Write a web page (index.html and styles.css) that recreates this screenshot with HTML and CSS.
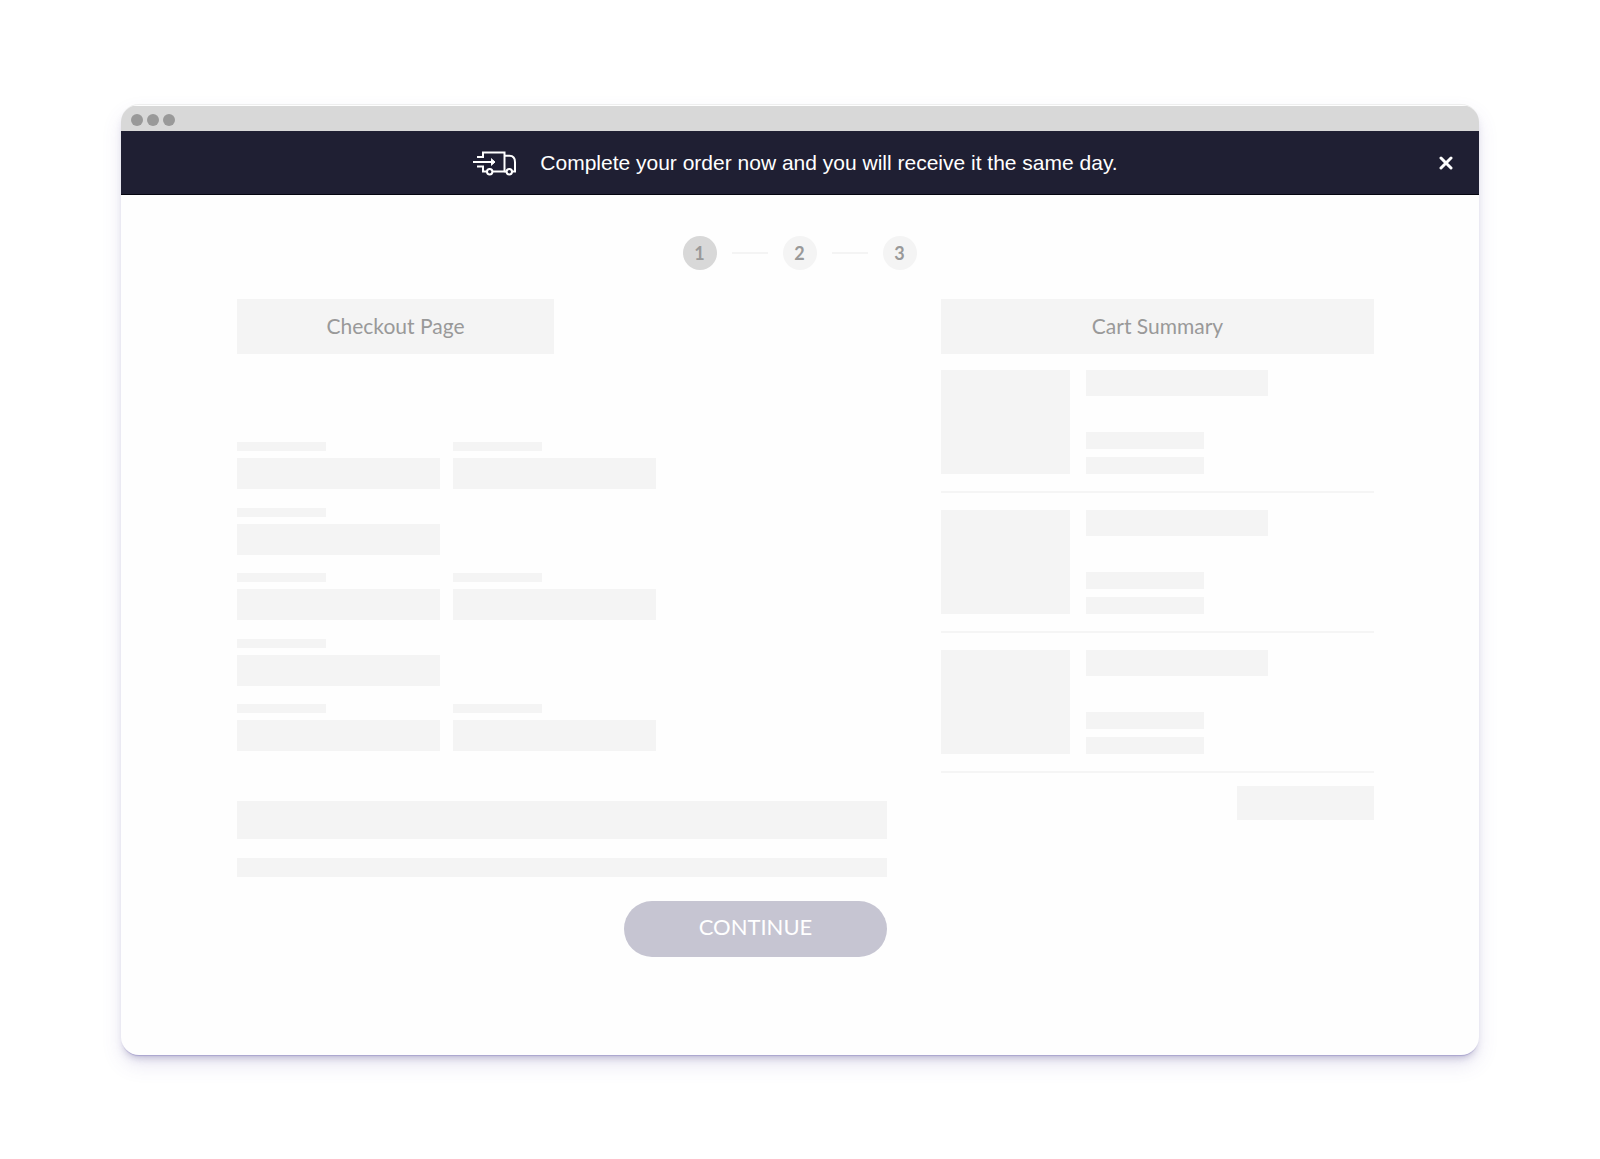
FILE: index.html
```html
<!DOCTYPE html>
<html lang="en">
<head>
<meta charset="utf-8">
<meta name="viewport" content="width=device-width, initial-scale=1">
<title>Checkout Page</title>
<link rel="stylesheet" href="styles.css">
</head>
<body>
<div class="window">
  <div class="titlebar"><span class="dot"></span><span class="dot"></span><span class="dot"></span></div>
  <div class="banner">
    <div class="banner-message">
      <svg class="truck" viewBox="0 0 46 26" width="46" height="26" fill="none" stroke="currentColor" stroke-width="2" aria-hidden="true">
        <path d="M5 7h6V2.500h21.500v19H20.500M5 16.500h6v5h4M1 12h21"/>
        <path d="M19 8.500l4 3.500l-4 3.500" fill="currentColor" stroke-width="1"/>
        <path d="M32.500 5.700h5c3.500 0 5.500 2.500 5.500 6.500v9.300h-3M32.500 21.500h2"/>
        <circle cx="17.700" cy="21.700" r="2.700"/>
        <circle cx="37.300" cy="21.700" r="2.700"/>
      </svg>
      <span>Complete your order now and you will receive it the same day.</span>
    </div>
    <button class="close" type="button" aria-label="Close">
      <svg viewBox="0 0 14 14" width="14" height="14" fill="none" stroke="currentColor" stroke-width="3" stroke-linecap="round" aria-hidden="true"><path d="M2 2l10 10M12 2L2 12"/></svg>
    </button>
  </div>
  <main class="content">
    <ol class="steps">
      <li class="step step-current">1</li>
      <li class="step">2</li>
      <li class="step">3</li>
    </ol>
    <div class="columns">
      <form class="checkout">
        <h1 class="heading heading-checkout">Checkout Page</h1>
        <div class="fields">
          <div class="row">
            <div class="field"><label class="label" for="f1"></label><input class="input" id="f1" type="text"></div>
            <div class="field"><label class="label" for="f2"></label><input class="input" id="f2" type="text"></div>
          </div>
          <div class="row">
            <div class="field"><label class="label" for="f3"></label><input class="input" id="f3" type="text"></div>
          </div>
          <div class="row">
            <div class="field"><label class="label" for="f4"></label><input class="input" id="f4" type="text"></div>
            <div class="field"><label class="label" for="f5"></label><input class="input" id="f5" type="text"></div>
          </div>
          <div class="row">
            <div class="field"><label class="label" for="f6"></label><input class="input" id="f6" type="text"></div>
          </div>
          <div class="row">
            <div class="field"><label class="label" for="f7"></label><input class="input" id="f7" type="text"></div>
            <div class="field"><label class="label" for="f8"></label><input class="input" id="f8" type="text"></div>
          </div>
        </div>
        <div class="block block-tall"></div>
        <div class="block block-short"></div>
        <button class="continue" type="button">CONTINUE</button>
      </form>
      <section class="cart">
        <h2 class="heading">Cart Summary</h2>
        <ul class="items">
          <li class="item"><div class="thumb"></div><div class="info"><div class="name"></div><div class="detail"></div><div class="detail"></div></div></li>
          <li class="item"><div class="thumb"></div><div class="info"><div class="name"></div><div class="detail"></div><div class="detail"></div></div></li>
          <li class="item"><div class="thumb"></div><div class="info"><div class="name"></div><div class="detail"></div><div class="detail"></div></div></li>
        </ul>
        <div class="total"></div>
      </section>
    </div>
  </main>
</div>
</body>
</html>
```
FILE: styles.css
```css
* { box-sizing: border-box; }

body {
  margin: 0;
  padding: 104px 121px;
  background: #fff;
  color: #999;
  font-family: Lato, "Open Sans", sans-serif;
}

ol, ul { margin: 0; padding: 0; list-style: none; }

.window {
  overflow: hidden;
  border-top: 1px solid #eee;
  border-radius: 18px;
  background: #fefefe;
  box-shadow:
    0 2px 1px -1px #aaa5cf,
    0 6px 8px -4px rgba(70, 60, 120, 0.35),
    0 10px 20px rgba(90, 80, 170, 0.13);
}

.titlebar {
  display: flex;
  align-items: center;
  gap: 4px;
  height: 25px;
  margin-top: 1px;
  padding: 2px 10px 0;
  background: #d8d8d8;
}

.dot {
  width: 12px;
  height: 12px;
  border-radius: 50%;
  background: #999;
}

.banner {
  display: grid;
  grid-template-columns: 1fr auto 1fr;
  align-items: center;
  min-height: 64px;
  padding: 1px 26px 0;
  border-bottom: 1px solid #050510;
  background: #1f1f33;
  color: #fff;
  font-family: "Liberation Sans", Arial, sans-serif;
  font-size: 21px;
  line-height: 26px;
}

.banner-message {
  grid-column: 2;
  display: flex;
  align-items: center;
  gap: 22px;
  padding-right: 10px;
}

.truck { flex: none; }

.close {
  justify-self: end;
  display: flex;
  padding: 0;
  border: 0;
  background: none;
  color: #fff;
  cursor: pointer;
}

.content { padding: 41px 105px 98px 116px; }

.steps {
  display: flex;
  justify-content: center;
  align-items: center;
  gap: 66px;
  /* evens out the page's unequal side padding */
  margin: 0 0 29px -12px;
}

.step {
  position: relative;
  width: 34px;
  height: 34px;
  border-radius: 50%;
  background: #f4f4f4;
  font-size: 18px;
  font-weight: 700;
  line-height: 34px;
  text-align: center;
}

.step-current { background: #d8d8d8; }

.step + .step::before {
  content: "";
  position: absolute;
  top: 16px;
  right: 49px;
  width: 36px;
  height: 2px;
  background: #f4f4f4;
}

.columns {
  display: grid;
  grid-template-columns: 650fr 433fr;
  gap: 54px;
}

.checkout {
  display: flex;
  flex-direction: column;
}

.heading {
  margin: 0;
  padding: 14px 0 15px;
  background: #f4f4f4;
  font-size: 21px;
  font-weight: 400;
  line-height: 26px;
  text-align: center;
}

.heading-checkout {
  width: 317px;
  margin-bottom: 88px;
}

.fields {
  display: flex;
  flex-direction: column;
  justify-content: space-between;
  min-height: 309px;
  margin-bottom: 50px;
}

.row { display: flex; gap: 13px; }

.field { width: 203px; }

.label {
  display: block;
  width: 89px;
  height: 9px;
  margin-bottom: 7px;
  background: #f4f4f4;
}

.input {
  display: block;
  width: 100%;
  height: 31px;
  padding: 0 10px;
  border: 0;
  background: #f4f4f4;
}

.block { background: #f4f4f4; }
.block-tall { height: 38px; margin-bottom: 19px; }
.block-short { height: 19px; margin-bottom: 24px; }

.continue {
  align-self: flex-end;
  width: 263px;
  height: 56px;
  padding: 0 0 4px;
  border: 0;
  border-radius: 28px;
  background: #c6c5d2;
  color: #fff;
  font-family: inherit;
  font-size: 22px;
  line-height: 26px;
  cursor: pointer;
}

.item {
  display: flex;
  gap: 16px;
  padding: 16px 0 17px;
  border-bottom: 2px solid #f5f5f5;
}

.item + .item { padding-top: 17px; }

.thumb {
  width: 129px;
  height: 104px;
  background: #f4f4f4;
}

.info {
  display: flex;
  flex-direction: column;
  gap: 8px;
}

.name {
  width: 182px;
  height: 26px;
  margin-bottom: auto;
  background: #f4f4f4;
}

.detail {
  width: 118px;
  height: 17px;
  background: #f4f4f4;
}

.total {
  width: 137px;
  height: 34px;
  margin: 13px 0 0 auto;
  background: #f4f4f4;
}
```
